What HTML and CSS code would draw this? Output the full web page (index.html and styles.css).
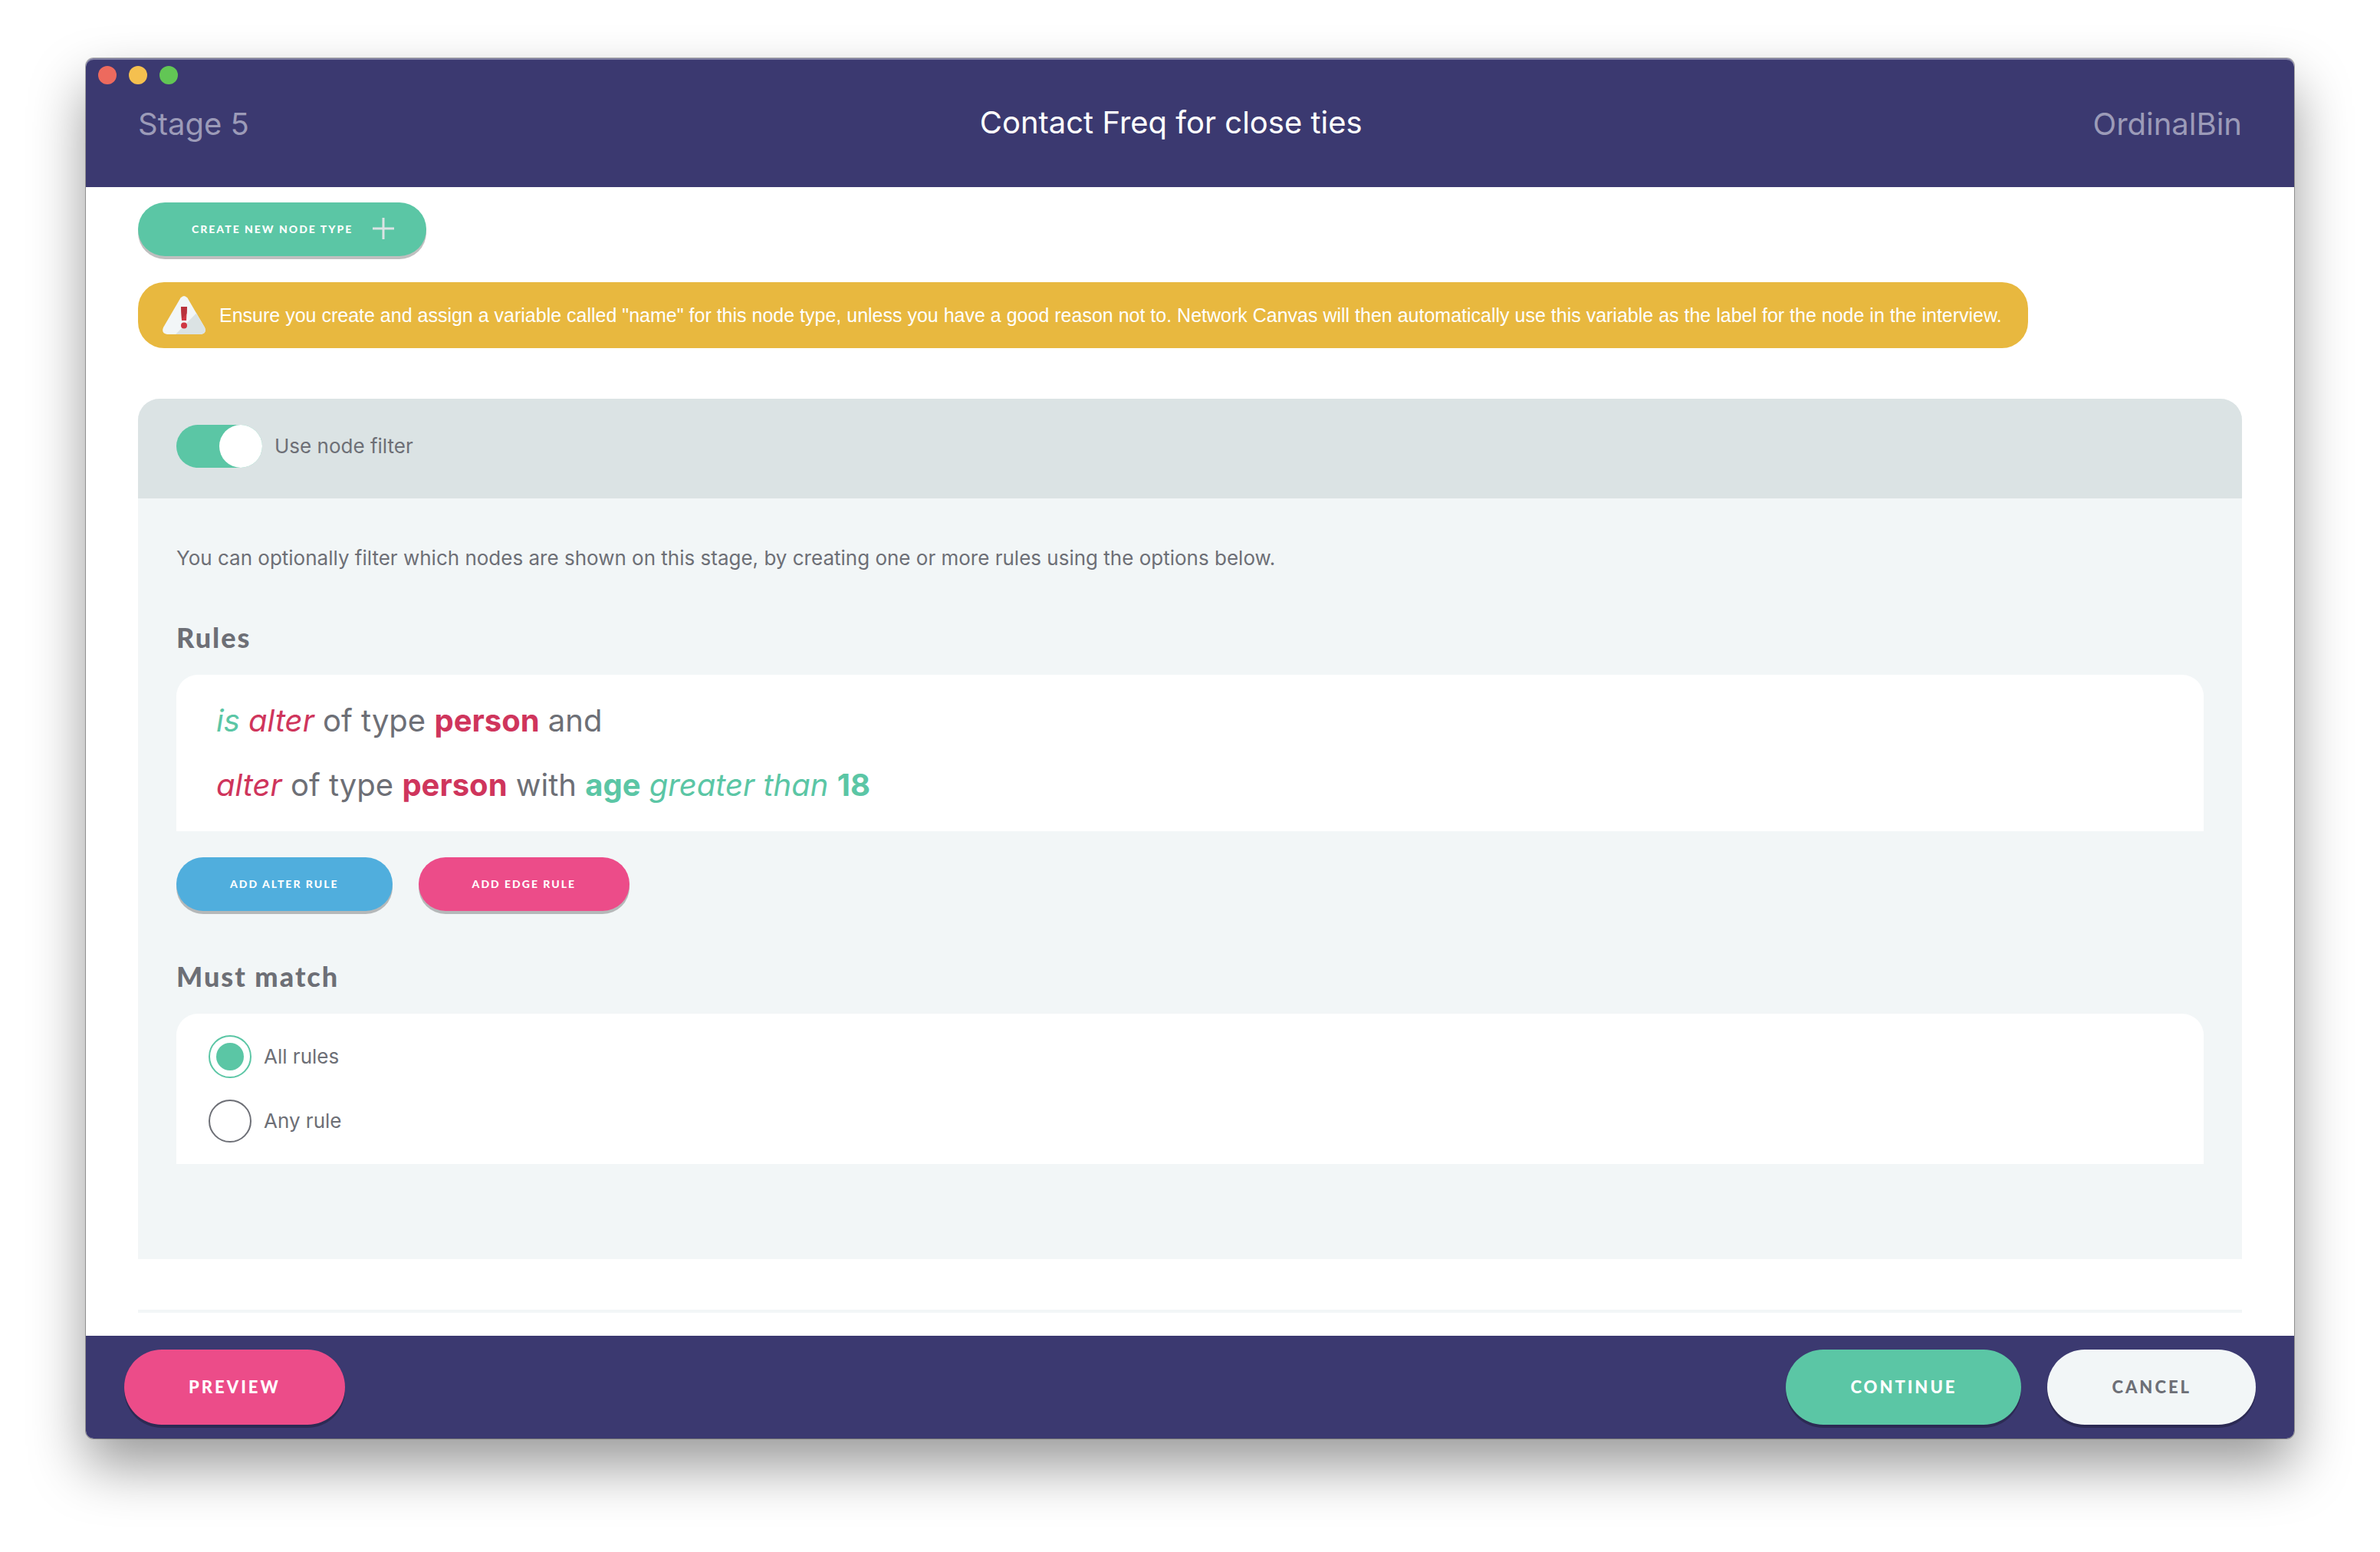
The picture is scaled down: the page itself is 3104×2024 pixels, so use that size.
FILE: index.html
```html
<!DOCTYPE html>
<html lang="en">
<head>
<meta charset="utf-8">
<title>Contact Freq for close ties</title>
<link rel="stylesheet" href="styles.css">
</head>
<body>
<div class="window">
  <header class="titlebar">
    <div class="lights"><span class="light light-close"></span><span class="light light-minimize"></span><span class="light light-zoom"></span></div>
    <div class="titles">
      <span class="meta">Stage 5</span>
      <h1 class="title">Contact Freq for close ties</h1>
      <span class="meta">OrdinalBin</span>
    </div>
  </header>
  <main class="content">
    <button class="button button-small button-icon green" type="button">CREATE NEW NODE TYPE
      <svg class="plus" viewBox="0 0 28 28" aria-hidden="true"><path d="M14 0V28M0 14H28" stroke="#dbe3e4" stroke-width="3"/></svg>
    </button>
    <div class="notice">
      <svg class="warning" viewBox="0 0 56 50" aria-hidden="true">
        <path d="M23.500 2.500Q28-2.500 32.500 2.500L55 41Q58 49 50 50H6Q-2 49 1 41Z" fill="#f2f6f7"/>
        <path d="M44 22.500L55 41Q58 49 50 50H17Z" fill="#dbe3e4"/>
        <path d="M24 14H32L31 32H25Z" fill="#cf3742"/>
        <path d="M24 14H32L31.500 23L25 30Z" fill="#b8323c"/>
        <circle cx="28" cy="38.500" r="4" fill="#cf3742"/>
      </svg>
      <p class="notice-text">Ensure you create and assign a variable called "name" for this node type, unless you have a good reason not to. Network Canvas will then automatically use this variable as the label for the node in the interview.</p>
    </div>
    <section class="panel">
      <div class="panel-head">
        <label class="choice"><input class="toggle" type="checkbox" checked>Use node filter</label>
      </div>
      <div class="panel-body">
        <p class="intro">You can optionally filter which nodes are shown on this stage, by creating one or more rules using the options below.</p>
        <h2 class="heading">Rules</h2>
        <div class="card rules">
          <p class="rule"><em class="operator">is</em> <em class="entity">alter</em> of type <strong class="entity">person</strong> and</p>
          <p class="rule"><em class="entity">alter</em> of type <strong class="entity">person</strong> with <strong class="operator">age</strong> <em class="operator">greater than</em> <strong class="operator">18</strong></p>
        </div>
        <div class="actions">
          <button class="button button-small blue" type="button">ADD ALTER RULE</button>
          <button class="button button-small pink" type="button">ADD EDGE RULE</button>
        </div>
        <h2 class="heading" id="match">Must match</h2>
        <div class="card options" role="radiogroup" aria-labelledby="match">
          <label class="choice"><input class="radio" type="radio" name="match" checked>All rules</label>
          <label class="choice"><input class="radio" type="radio" name="match">Any rule</label>
        </div>
      </div>
    </section>
    <hr class="divider">
  </main>
  <footer class="footer">
    <button class="button button-large pink" type="button">PREVIEW</button>
    <div class="footer-end">
      <button class="button button-large green" type="button">CONTINUE</button>
      <button class="button button-large pale" type="button">CANCEL</button>
    </div>
  </footer>
</div>
</body>
</html>
```
FILE: styles.css
```css
* { box-sizing: border-box; }
body {
  margin: 0;
  padding: 76px 112px 148px;
  min-height: 100vh;
  display: flex;
  background: #fff;
  color: #6d6f76;
  font-family: Inter, "Liberation Sans", sans-serif;
  font-size: 26px;
  line-height: 36px;
}
h1, h2, p { margin: 0; }
.window {
  flex: 1;
  min-width: 0;
  display: flex;
  flex-direction: column;
  border-radius: 10px;
  background: #fff;
  box-shadow: 0 0 0 1px rgba(0, 0, 0, .3), 0 36px 72px rgba(0, 0, 0, .4);
}
.titlebar {
  padding: 10px 68px 56px;
  border-radius: 10px 10px 0 0;
  background: #3b3970;
  color: #fff;
  box-shadow: inset 0 2px rgba(255, 255, 255, .35);
}
.lights { display: flex; gap: 16px; margin-left: -52px; }
.light { width: 24px; height: 24px; border-radius: 50%; }
.light-close { background: #ed6a5e; }
.light-minimize { background: #f5c04f; }
.light-zoom { background: #62c655; }
.titles {
  display: flex;
  justify-content: space-between;
  align-items: flex-start;
  margin-top: 24px;
  font-size: 40px;
  line-height: 52px;
}
.title { font-size: 40px; font-weight: 400; }
.meta { padding-top: 2px; color: #9c9bb8; }
.content { flex: 1; padding: 20px 68px 30px; }
.button {
  display: inline-flex;
  align-items: center;
  justify-content: center;
  border: 0;
  border-radius: 49px;
  color: #fff;
  font-family: Lato, "Open Sans", sans-serif;
  font-weight: 900;
  white-space: nowrap;
}
.button-small {
  height: 70px;
  padding: 0 70px 2px;
  font-size: 14px;
  letter-spacing: 2px;
  box-shadow: 0 4px rgba(0, 0, 0, .25);
}
.button-icon { display: flex; gap: 26px; padding-right: 42px; }
.button-large {
  height: 98px;
  padding: 0 84px 2px;
  font-size: 22px;
  letter-spacing: 3px;
  box-shadow: 0 4px rgba(0, 0, 0, .25);
}
.plus { width: 28px; height: 28px; }
.green { background: #5bc6a5; }
.pink { background: #ec4c89; }
.blue { background: #50aedd; }
.pale { background: #f2f6f7; color: #6d6f76; }
.notice {
  display: flex;
  align-items: center;
  gap: 18px;
  width: fit-content;
  margin-top: 34px;
  padding: 18px 34px 18px 32px;
  min-height: 86px;
  border-radius: 34px;
  background: #e8b83f;
  color: #fff;
}
.notice-text {
  font-family: "Liberation Sans", Arial, sans-serif;
  font-size: 25px;
}
.warning { flex: none; width: 56px; height: 50px; }
.panel {
  margin-top: 66px;
  border-radius: 28px 28px 0 0;
  background: #f2f6f7;
}
.panel-head {
  padding: 34px 50px 40px;
  border-radius: 28px 28px 0 0;
  background: #dbe3e4;
}
.choice { display: flex; align-items: center; gap: 16px; }
.toggle {
  appearance: none;
  display: flex;
  justify-content: flex-end;
  width: 112px;
  height: 56px;
  margin: 0;
  border-radius: 28px;
  background: #5bc6a5;
}
.toggle::before {
  content: "";
  width: 56px;
  border-radius: 50%;
  background: #fff;
}
.panel-body { padding: 60px 50px 124px; }
.heading {
  padding: 60px 0 24px;
  font-family: Lato, "Open Sans", sans-serif;
  font-size: 36px;
  font-weight: 900;
  letter-spacing: 2px;
  line-height: 50px;
}
.card {
  border-radius: 28px 28px 0 0;
  background: #fff;
}
.rules { padding: 18px 52px; }
.rule {
  font-size: 40px;
  line-height: 84px;
}
.entity { color: #cf355c; }
.operator { color: #5bc6a5; }
.actions { display: flex; gap: 34px; margin-top: 34px; }
.options { display: grid; gap: 28px; padding: 28px 42px; }
.radio {
  appearance: none;
  display: grid;
  place-items: center;
  width: 56px;
  height: 56px;
  margin: 0;
  border: 2px solid #6d6f76;
  border-radius: 50%;
}
.radio:checked { border-color: #5bc6a5; }
.radio:checked::before {
  content: "";
  width: 36px;
  height: 36px;
  border-radius: 50%;
  background: #5bc6a5;
}
.divider {
  height: 4px;
  margin: 66px 0 0;
  border: 0;
  background: #f2f6f7;
}
.footer {
  display: flex;
  justify-content: space-between;
  padding: 18px 50px;
  border-radius: 0 0 10px 10px;
  background: #3b3970;
}
.footer-end { display: flex; gap: 34px; }
```
